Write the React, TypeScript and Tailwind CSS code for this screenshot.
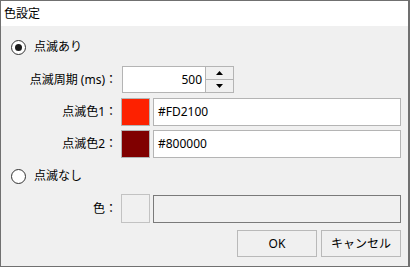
import React from 'react';

const font = { fontFamily: '"Noto Sans", "Noto Sans CJK JP", sans-serif' };

function Radio({ checked, label }: { checked: boolean; label: string }) {
  return (
    <div className="flex items-center gap-[8px] h-[16px]">
      <span className="w-[15px] h-[15px] rounded-full border border-[#333333] bg-white flex items-center justify-center">
        {checked && <span className="w-[7px] h-[7px] rounded-full bg-[#1a1a1a]" />}
      </span>
      <span>{label}</span>
    </div>
  );
}

function ColorRow({ label, color, value }: { label: string; color: string; value: string }) {
  return (
    <div className="flex items-center h-[28px]">
      <div className="w-[96px] ml-[10px] text-right">{label}</div>
      <div className="ml-[4px] w-[29px] h-[28px] border border-[#b4b4b4]" style={{ backgroundColor: color }} />
      <div className="ml-[3px] flex-1 h-[28px] border border-[#b4b4b4] bg-white flex items-center pl-[4px]">
        {value}
      </div>
    </div>
  );
}

export default function App() {
  return (
    <div
      className="w-[410px] h-[267px] border border-r-2 border-[#707070] flex flex-col text-[12px] text-black"
      style={font}
    >
      <div className="h-[25px] bg-white flex items-center pl-[3px]">色設定</div>
      <div className="flex-1 bg-[#f0f0f0] pl-[10px] pr-[7px]">
        <div className="mt-[13px]">
          <Radio checked label="点滅あり" />
        </div>

        <div className="mt-[11px] flex items-center h-[27px]">
          <div className="w-[96px] ml-[10px] text-right whitespace-nowrap">点滅周期 (ms)：</div>
          <div className="ml-[5px] w-[84px] h-[27px] border border-[#b4b4b4] bg-white flex items-center justify-end pr-[3px]">
            500
          </div>
          <div className="w-[28px] h-[27px] flex flex-col">
            <div className="h-[14px] border border-l-0 border-[#b4b4b4] bg-[#f0f0f0] flex items-center justify-center">
              <svg width="7" height="4" viewBox="0 0 7 4">
                <path d="M3.5 0 L7 4 L0 4 Z" fill="#000" />
              </svg>
            </div>
            <div className="h-[13px] border border-l-0 border-t-0 border-[#b4b4b4] bg-[#f0f0f0] flex items-center justify-center">
              <svg width="7" height="4" viewBox="0 0 7 4">
                <path d="M0 0 L7 0 L3.5 4 Z" fill="#000" />
              </svg>
            </div>
          </div>
        </div>

        <div className="mt-[5px]">
          <ColorRow label="点滅色1：" color="#FD2100" value="#FD2100" />
        </div>
        <div className="mt-[4px]">
          <ColorRow label="点滅色2：" color="#800000" value="#800000" />
        </div>

        <div className="mt-[10px]">
          <Radio checked={false} label="点滅なし" />
        </div>

        <div className="mt-[10px] flex items-center h-[29px]">
          <div className="w-[96px] ml-[10px] text-right">色：</div>
          <div className="ml-[4px] w-[29px] h-[29px] border border-[#c2c2c2] bg-[#f0f0f0]" />
          <div className="ml-[3px] flex-1 h-[28px] border border-[#7a7a7a] bg-[#f0f0f0]" />
        </div>

        <div className="mt-[7px] flex justify-end gap-[4px]">
          <button className="w-[80px] h-[27px] border border-[#b9b9b9] bg-[#f0f0f0] flex items-center justify-center">
            OK
          </button>
          <button className="w-[80px] h-[27px] border border-[#b9b9b9] bg-[#f0f0f0] flex items-center justify-center">
            キャンセル
          </button>
        </div>
      </div>
    </div>
  );
}
